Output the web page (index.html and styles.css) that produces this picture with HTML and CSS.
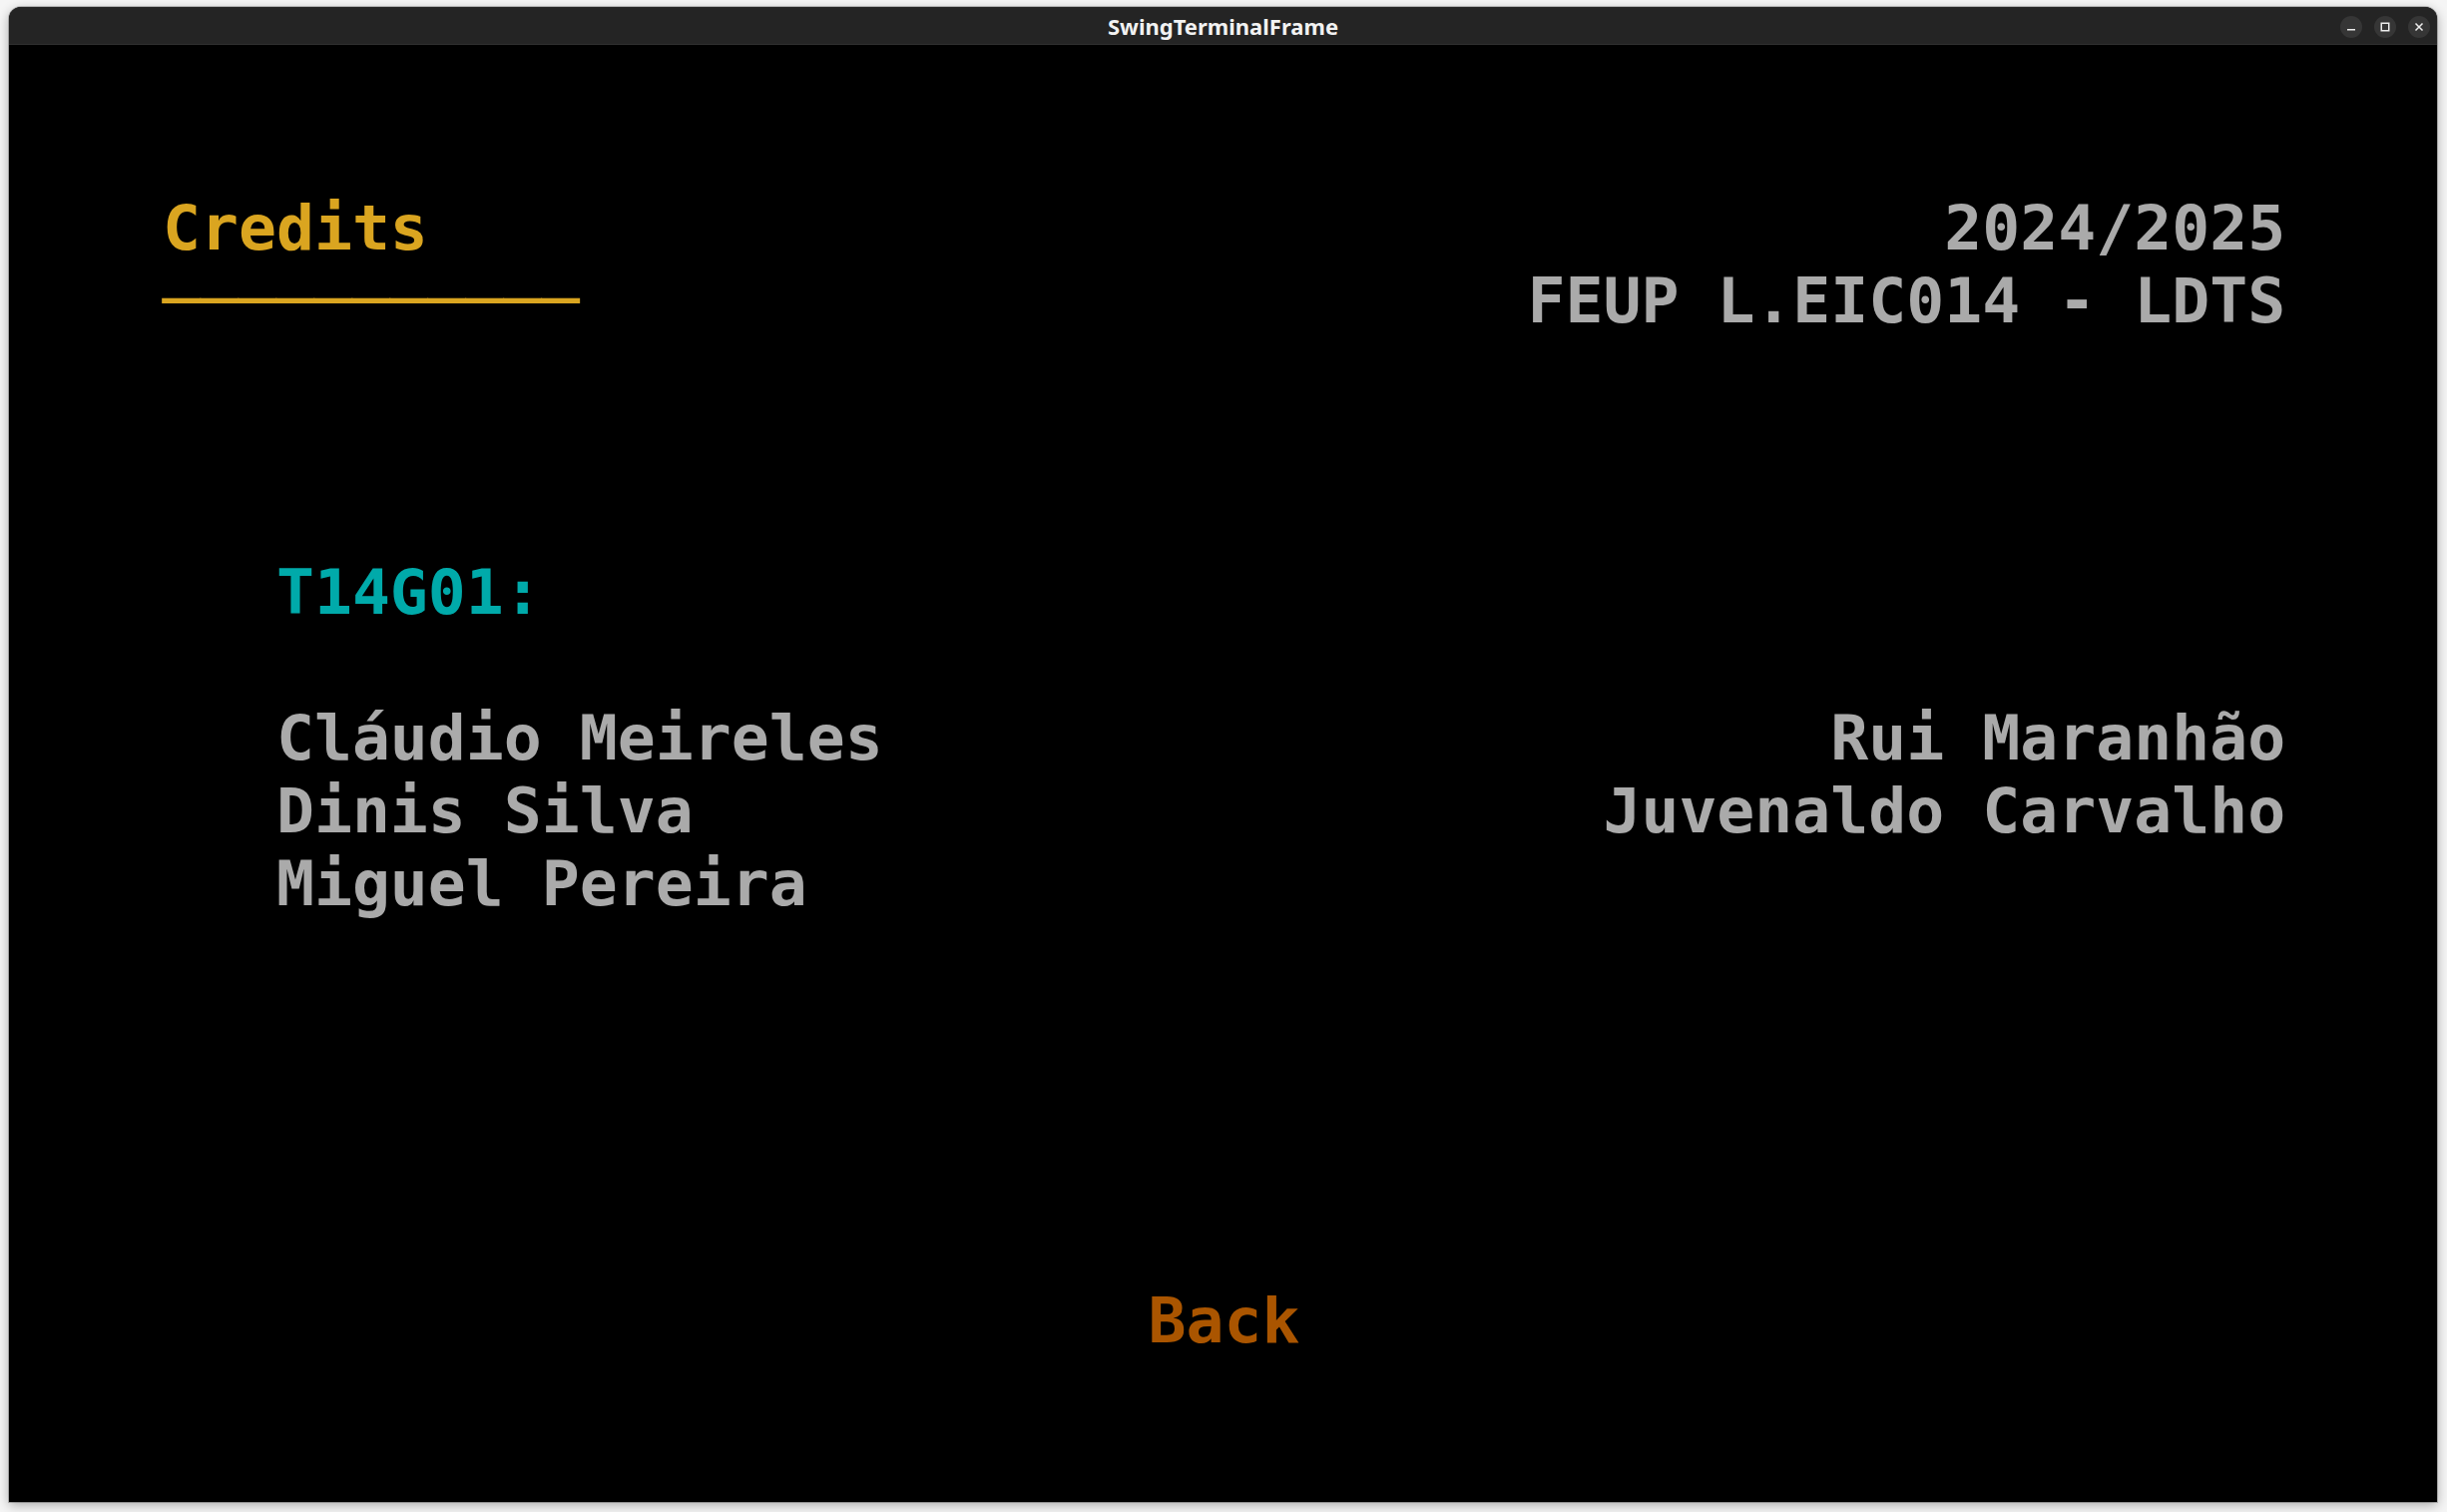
FILE: index.html
```html
<!DOCTYPE html>
<html lang="pt">
<head>
<meta charset="utf-8">
<title>SwingTerminalFrame</title>
<link rel="stylesheet" href="styles.css">
</head>
<body>
<div class="window">
  <div class="titlebar">
    <div class="spacer"></div>
    <div class="title">SwingTerminalFrame</div>
    <div class="controls">
      <span class="btn"><svg width="22" height="22" viewBox="0 0 22 22"><line x1="7" y1="13.8" x2="15" y2="13.8" stroke="#ececec" stroke-width="1.5"/></svg></span>
      <span class="btn"><svg width="22" height="22" viewBox="0 0 22 22"><rect x="7.25" y="7.25" width="7.5" height="7.5" fill="none" stroke="#ececec" stroke-width="1.5"/></svg></span>
      <span class="btn"><svg width="22" height="22" viewBox="0 0 22 22"><path d="M7.5 7.5 L14.5 14.5 M14.5 7.5 L7.5 14.5" stroke="#ececec" stroke-width="1.5" fill="none"/></svg></span>
    </div>
  </div>
  <div class="terminal">
    <div class="row"> </div>
    <div class="row"> </div>
    <div class="row">    <span class="gold">Credits</span>                                        <span class="gray">2024/2025</span></div>
    <div class="row">    <span class="gold">───────────</span>                         <span class="gray">FEUP L.EIC014 - LDTS</span></div>
    <div class="row"> </div>
    <div class="row"> </div>
    <div class="row"> </div>
    <div class="row">       <span class="cyan">T14G01:</span></div>
    <div class="row"> </div>
    <div class="row">       <span class="gray">Cláudio Meireles</span>                         <span class="gray">Rui Maranhão</span></div>
    <div class="row">       <span class="gray">Dinis Silva</span>                        <span class="gray">Juvenaldo Carvalho</span></div>
    <div class="row">       <span class="gray">Miguel Pereira</span></div>
    <div class="row"> </div>
    <div class="row"> </div>
    <div class="row"> </div>
    <div class="row"> </div>
    <div class="row"> </div>
    <div class="row">                              <span class="brown">Back</span></div>
    <div class="row"> </div>
    <div class="row"> </div>
  </div>
</div>
</body>
</html>
```

FILE: styles.css
```css
html, body {
  margin: 0;
  padding: 0;
}
body {
  width: 2452px;
  height: 1515px;
  overflow: hidden;
  background: #f5f5f5;
  padding-top: 7px;
  box-sizing: border-box;
}
.window {
  margin-left: 9px;
  width: 2433px;
  height: 1498px;
  background: #000;
  border-radius: 12px 12px 0 0;
  overflow: hidden;
  box-shadow: 0 0 0 1px rgba(0, 0, 0, 0.22), 0 3px 12px rgba(0, 0, 0, 0.32);
  display: flex;
  flex-direction: column;
}
.titlebar {
  height: 37px;
  flex: 0 0 37px;
  background: #242424;
  border-bottom: 1px solid #2f2f2f;
  display: grid;
  grid-template-columns: 1fr auto 1fr;
  align-items: center;
}
.title {
  font-family: "Noto Sans", "DejaVu Sans", sans-serif;
  font-weight: 700;
  font-size: 22px;
  color: #f2f2f2;
  line-height: 37px;
  padding-top: 1px;
}
.controls {
  justify-self: end;
  display: flex;
  gap: 12px;
  padding-right: 7px;
  padding-top: 1px;
}
.btn {
  width: 22px;
  height: 22px;
  border-radius: 50%;
  background: #363636;
  display: flex;
}
.terminal {
  flex: 1 1 auto;
  padding-top: 1px;
  padding-left: 2px;
  overflow: hidden;
  font-family: "DejaVu Sans Mono", monospace;
  font-weight: 700;
  font-size: 63.1px;
  color: #aaaaaa;
}
.row {
  height: 73px;
  line-height: 73px;
  white-space: pre;
}
.gold { color: #daa520; }
.gray { color: #aaaaaa; }
.cyan { color: #00aaaa; }
.brown { color: #aa5500; }
```
